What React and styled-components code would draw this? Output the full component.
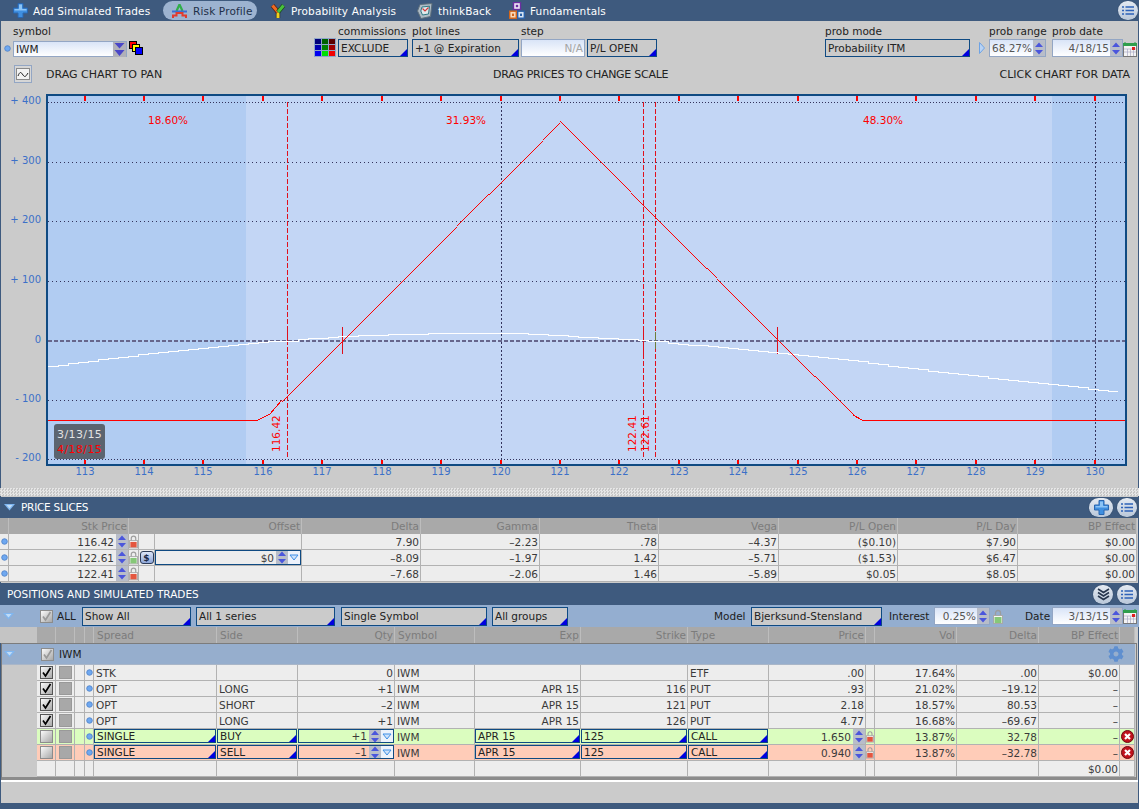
import React from 'react'
import styled, { createGlobalStyle, css } from 'styled-components'
import { FaCog } from 'react-icons/fa'

const NAVY = '#3e5a7e'
const EDGE = '#0f4a82'

const GlobalStyle = createGlobalStyle`
  html, body {
    margin: 0;
    padding: 0;
    width: 1139px;
    height: 809px;
    overflow: hidden;
  }
  body {
    font-family: "DejaVu Sans", "Liberation Sans", sans-serif;
    font-size: 10.5px;
    color: #222;
  }
`

const placed = css`
  flex: none;
  ${(p) => p.$w !== undefined && `width: ${p.$w}px;`}
  ${(p) => p.$ml !== undefined && `margin-left: ${p.$ml}px;`}
`

const Window = styled.div`
  width: 1139px;
  height: 809px;
  display: flex;
  flex-direction: column;
  background: #cbcbcb;
  box-shadow: inset 1px 0 0 ${NAVY}, inset -1px 0 0 ${NAVY};
`

/* ---- top tabs ---- */
const TabBar = styled.div`
  height: 21px;
  flex: none;
  display: flex;
  align-items: center;
  gap: 5px;
  padding: 0 1px 0 5px;
  background: ${NAVY};
`

const Tab = styled.div`
  ${placed}
  height: 19px;
  box-sizing: border-box;
  display: flex;
  align-items: center;
  gap: 5px;
  padding: 0 8px;
  border-radius: 10px;
  white-space: nowrap;
  letter-spacing: 0.15px;
  color: ${(p) => (p.$active ? '#1d2f48' : '#fff')};
  background: ${(p) => (p.$active ? '#9db3d0' : 'transparent')};

  svg {
    flex: none;
  }
`

const RoundButton = styled.div`
  ${placed}
  height: 19px;
  width: ${(p) => p.$wide ? 24 : 20}px;
  border-radius: 10px;
  display: flex;
  align-items: center;
  justify-content: center;
  background: linear-gradient(#e4eaf2, #b9c7d9);
  box-shadow: 0 0 1px #20344f;
`

const BarEnd = styled.div`
  margin-left: auto;
  display: flex;
  gap: 4px;
`

/* ---- form rows ---- */
const FormRow = styled.div`
  height: 43px;
  flex: none;
  box-sizing: border-box;
  padding-top: 3px;
  display: flex;
  align-items: flex-start;
`

const Field = styled.div`
  ${placed}
  display: flex;
  flex-direction: column;
`

const FieldLabel = styled.div`
  height: 15px;
  line-height: 14px;
  white-space: nowrap;
  color: #222;
`

const Bare = styled.div`
  ${placed}
  display: flex;
  align-items: center;
  margin-top: ${(p) => p.$mt || 0}px;
`

const Select = styled.div`
  ${placed}
  position: relative;
  box-sizing: border-box;
  height: ${(p) => p.$h || 18}px;
  border: 1px solid ${EDGE};
  padding: 0 2px;
  display: flex;
  align-items: center;
  white-space: nowrap;
  overflow: hidden;
  background: ${(p) => p.$bg || 'transparent'};
  color: #222;

  &::after {
    content: '';
    position: absolute;
    right: 0;
    bottom: 0;
    border-style: solid;
    border-width: 0 0 7px 7px;
    border-color: transparent transparent #0000e0 transparent;
  }
`

const SpinField = styled.div`
  ${placed}
  box-sizing: border-box;
  height: ${(p) => p.$h || 18}px;
  margin-top: ${(p) => p.$mt || 0}px;
  border: 1px solid #93a6c4;
  display: flex;
  align-items: stretch;
  background: linear-gradient(#d9e4f7, #fff);
  color: ${(p) => p.$muted ? '#a4a4a4' : '#555'};
`

const SpinText = styled.div`
  flex: 1;
  display: flex;
  align-items: center;
  justify-content: flex-end;
  padding-right: 1px;
  white-space: nowrap;
  font-weight: ${(p) => (p.$strong ? 500 : 400)};
  ${(p) => p.$left && 'justify-content: flex-start; padding-left: 2px; color: #222;'}
`

const SpinBlock = styled.div`
  width: 12px;
  flex: none;
  display: flex;
  align-items: center;
  justify-content: center;
  background: #b8bdc9;
`

const HintRow = styled.div`
  height: 28px;
  flex: none;
  display: grid;
  grid-template-columns: 14px 32px 447px 1fr auto;
  align-items: center;
  padding-right: 9px;
  padding-bottom: 8px;
  box-sizing: border-box;
  font-size: 11px;
`

const HintIcon = styled.div`
  grid-column: 2;
  width: 18px;
  height: 18px;
  box-sizing: border-box;
  border: 1px solid #93a6c4;
  display: flex;
  align-items: center;
  justify-content: center;
  background: #d6d6d6;
`

const HintText = styled.div`
  white-space: nowrap;
  letter-spacing: ${(p) => p.$ls || 0}px;
`

/* ---- chart ---- */
const ChartWrap = styled.div`
  position: relative;
  height: 396px;
  flex: none;
`

const ChartSvg = styled.svg`
  display: block;
  font-family: "DejaVu Sans", sans-serif;
  font-size: 10px;
`

const DateTag = styled.div`
  position: absolute;
  left: 54px;
  top: 332px;
  width: 51px;
  height: 35px;
  box-sizing: border-box;
  padding: 3px 0 0 3px;
  border-radius: 3px;
  background: #5b6470;
  font-size: 11px;
  line-height: 15px;
  letter-spacing: 0.4px;
  color: #e2e2e2;
`

const DateRed = styled.div`
  color: #f00;
`

const Splitter = styled.div`
  height: 8px;
  flex: none;
  margin-bottom: 1px;
  background: repeating-conic-gradient(#e6e6e6 0 25%, #c6c6c6 0 50%) 0 0 / 3px 3px;
`

/* ---- sections ---- */
const SectionBar = styled.div`
  height: ${(p) => p.$h}px;
  flex: none;
  box-sizing: border-box;
  display: flex;
  align-items: center;
  padding: 0 2px 0 4px;
  background: ${NAVY};
  color: #fff;
`

const SectionTitle = styled.div`
  margin-left: ${(p) => p.$ml}px;
  white-space: nowrap;
  letter-spacing: ${(p) => p.$ls || 0}px;
  padding-bottom: 1px;
`

const SliceGrid = styled.div`
  display: grid;
  grid-template-columns: 9px 120px 10px 16px 147px 119px 119px 119px 120px 119px 120px 119px;
  grid-auto-rows: 16px;
  flex: none;
  margin-bottom: 1px;
`

const PositionHead = styled.div`
  display: grid;
  grid-template-columns: 37px 19px 19px 10px 9px 123px 81px 97px 80px 106px 107px 81px 97px 9px 82px 82px 81px 15px;
  height: 16px;
  flex: none;
`

const PositionBody = styled.div`
  display: grid;
  grid-template-columns: 35px 19px 19px 10px 9px 123px 81px 97px 80px 106px 107px 81px 97px 9px 82px 82px 81px 15px;
  grid-template-rows: 21px;
  grid-auto-rows: 16px;
  flex: none;
  width: 1134px;
  margin-left: 1px;
  border: 1px solid #7c7c7c;
  border-bottom: 3px solid #8c8c8c;
`

const HeadCell = styled.div`
  grid-column: span ${(p) => p.$span || 1};
  box-sizing: border-box;
  display: flex;
  align-items: center;
  justify-content: ${(p) => (p.$right ? 'flex-end' : 'flex-start')};
  padding: 0 1px 0 3px;
  background: ${(p) => p.$plain ? '#c4c4c4' : '#a9a9a9'};
  border-right: 1px solid ${(p) => p.$plain ? '#c4c4c4' : '#bdbdbd'};
  color: #7c7c7c;
  white-space: nowrap;
`

const tints = { green: '#dbfdbf', red: '#ffccb8' }

const Cell = styled.div`
  grid-column: span ${(p) => p.$span || 1};
  box-sizing: border-box;
  min-width: 0;
  display: flex;
  align-items: center;
  justify-content: ${(p) => (p.$right ? 'flex-end' : p.$center ? 'center' : 'flex-start')};
  padding: ${(p) => (p.$flush ? '0' : '0 1px 0 2px')};
  background: ${(p) => tints[p.$tint] || '#ededed'};
  border-right: 1px solid #b2b2b2;
  border-bottom: 1px solid #b2b2b2;
  color: #3a3a3a;
  white-space: nowrap;
`

const Gutter = styled.div`
  background: #c9c9c9;
`

const EditCell = styled(Select)`
  height: 100%;
  width: 100%;
  padding: 0 2px 0 2px;
  justify-content: ${(p) => (p.$right ? 'flex-end' : 'flex-start')};
`

const EditWrap = styled.div`
  grid-column: span ${(p) => p.$span || 1};
  min-width: 0;
  box-sizing: border-box;
  height: 16px;
  padding: 0 1px 1px 0;
  background: ${(p) => tints[p.$tint]};
  border-bottom: 1px solid #b2b2b2;
`

const QtyField = styled.div`
  height: 100%;
  box-sizing: border-box;
  border: 1px solid ${EDGE};
  display: flex;
  align-items: stretch;
`

const OffsetField = styled(QtyField)`
  flex: 1;
`

const QtyText = styled.div`
  flex: 1;
  display: flex;
  align-items: center;
  justify-content: flex-end;
  padding-right: 2px;
  color: #3a3a3a;
`

const DropBox = styled.div`
  width: 12px;
  flex: none;
  display: flex;
  align-items: center;
  justify-content: center;
  background: #edf2fb;
`

const RightCell = styled(Cell)`
  padding: 0;
`

const GrowRight = styled.div`
  flex: 1;
  text-align: right;
  padding-right: 2px;
`

const MoneyButton = styled.div`
  width: 14px;
  height: 13px;
  box-sizing: border-box;
  border: 1px solid #2c3b57;
  border-radius: 3px;
  background: linear-gradient(#dde6f8, #8da6d8);
  display: flex;
  align-items: center;
  justify-content: center;
  font-size: 9px;
  font-weight: bold;
  color: #1c2a44;
`

const GroupRow = styled.div`
  grid-column: 1 / -1;
  height: 21px;
  box-sizing: border-box;
  display: flex;
  align-items: center;
  padding-left: 2px;
  background: #96aecd;
  border-bottom: 1px solid #a9b6c8;
`

const GearSlot = styled.div`
  margin-left: auto;
  margin-right: 11px;
  display: flex;
`

const Toolbar = styled.div`
  height: 22px;
  flex: none;
  display: flex;
  align-items: center;
  background: #94aed0;
`

const ToolLabel = styled.div`
  ${placed}
  white-space: nowrap;
  color: #1d1d1d;
`

const Status = styled.div`
  height: 23px;
  flex: none;
  box-sizing: border-box;
  border-top: 2px solid #fff;
  margin-left: 1px;
  margin-right: 1px;
`

const Foot = styled.div`
  flex: 1;
  background: ${NAVY};
`

const CheckBox = styled.div`
  ${placed}
  width: 13px;
  height: 13px;
  box-sizing: border-box;
  border: 1px solid ${(p) => (p.$soft ? '#8c8c8c' : '#555')};
  background: linear-gradient(135deg, #fafafa, #a8a8a8);
  display: flex;
  align-items: center;
  justify-content: center;
`

const ChartToggle = styled.div`
  width: 13px;
  height: 13px;
  box-sizing: border-box;
  border: 1px solid #999;
  background: #a8a8a8;
`

/* ---- drawings ---- */
const Check = ({ color = '#000' }) => (
  <svg width="11" height="11" viewBox="0 0 11 11">
    <path d="M2 5.5 L4.5 9 L9.5 1" fill="none" stroke={color} strokeWidth="1.7" />
  </svg>
)

const Collapse = () => (
  <svg width="11" height="7" viewBox="0 0 11 7">
    <path d="M0 0 H11 L5.5 6.5 Z" fill="#7fb6f0" />
    <path d="M2.5 1 H8.5 L5.5 4.5 Z" fill="#bfdcf8" />
  </svg>
)

const Dot = () => (
  <svg width="7" height="7" viewBox="0 0 7 7">
    <circle cx="3.5" cy="3.5" r="2.8" fill="#6fa8f0" stroke="#4d80c8" strokeWidth="0.8" />
  </svg>
)

const Arrows = () => (
  <svg width="10" height="15" viewBox="0 0 10 15">
    <path d="M5 1.5 L9 6 H1 Z M1 9 H9 L5 13.5 Z" fill="#4b56dc" />
  </svg>
)

const DropGlyph = () => (
  <svg width="10" height="7" viewBox="0 0 10 7">
    <path d="M1 1 H9 L5 6 Z" fill="#cfe2fa" stroke="#3e8fe6" />
  </svg>
)

const Lock = ({ color }) => (
  <svg width="10" height="15" viewBox="0 0 10 15">
    <path d="M2.5 7 V4 a2.5 2.5 0 0 1 5 0 V7" fill="none" stroke="#9c9c9c" strokeWidth="1.3" />
    <rect x="0.5" y="6.5" width="9" height="8" fill="#f6f6f6" stroke="#a8a8a8" />
    <rect x="1.5" y="8" width="7" height="6" fill={color === 'green' ? '#86c878' : '#e4563f'} />
  </svg>
)

const ListGlyph = () => (
  <svg width="12" height="9" viewBox="0 0 12 9">
    <path d="M0 1 H2 M3.5 1 H12 M0 4.5 H2 M3.5 4.5 H12 M0 8 H2 M3.5 8 H12" stroke="#2d62b8" strokeWidth="1.4" />
  </svg>
)

const PlusGlyph = () => (
  <svg width="15" height="15" viewBox="0 0 15 15">
    <path d="M5 0.5 H10 V5 H14.5 V10 H10 V14.5 H5 V10 H0.5 V5 H5 Z" fill="#3f8fe0" stroke="#2a66b0" />
    <path d="M6 1.5 H9 V6 H13.5 V7.5 H1.5 V6 H6 Z" fill="#8cc4f6" />
  </svg>
)

const ChevronsGlyph = () => (
  <svg width="13" height="13" viewBox="0 0 13 13">
    <path d="M1 1 L6.5 4.5 L12 1 M1 4.5 L6.5 8 L12 4.5 M1 8 L6.5 11.5 L12 8" fill="none" stroke="#26364e" strokeWidth="1.6" />
  </svg>
)

const RiskIcon = () => (
  <svg width="17" height="16" viewBox="0 0 17 16">
    <path d="M8.5 1.5 L5.5 8 M8.5 1.5 L11.5 8" stroke="#2fae49" strokeWidth="2.2" fill="none" />
    <path d="M1 8.5 H16" stroke="#3d6fd0" strokeWidth="2" />
    <path d="M2 15 V12.5 H5.5 L5.5 10 H11.5 V12.5 H15 V15" stroke="#e23b2e" strokeWidth="2" fill="none" />
  </svg>
)

const ProbabilityIcon = () => (
  <svg width="16" height="16" viewBox="0 0 16 16">
    <path d="M8 15 V9" stroke="#2a2a2a" strokeWidth="4.4" />
    <path d="M8 15 V9" stroke="#f2d21c" strokeWidth="3" />
    <path d="M2.5 2.5 L8 9" stroke="#5a1f10" strokeWidth="4.4" />
    <path d="M2.5 2.5 L8 9" stroke="#ee6a20" strokeWidth="3" />
    <path d="M13.5 2.5 L8 9" stroke="#1c4a1c" strokeWidth="4.4" />
    <path d="M13.5 2.5 L8 9" stroke="#48c23c" strokeWidth="3" />
  </svg>
)

const ThinkBackIcon = () => (
  <svg width="16" height="16" viewBox="0 0 16 16">
    <path d="M3 1.5 L15 0.5 L13.5 13.5 L4 15.5 L0.5 8 Z" fill="#aebcc6" stroke="#5f707c" />
    <path d="M5 4 L12.5 3.2 L11.5 11 L5.5 12 L3.8 8 Z" fill="#dfe9ec" stroke="#2f7884" />
    <path d="M5.5 5.5 L8 8 L11.5 4.5" fill="none" stroke="#d23a3a" strokeWidth="1.2" />
  </svg>
)

const FundamentalsIcon = () => (
  <svg width="16" height="17" viewBox="0 0 16 17">
    <rect x="4.5" y="0.5" width="7" height="7" fill="#efe6f7" stroke="#6b2fa0" strokeWidth="1.4" />
    <rect x="0.7" y="9.2" width="6.6" height="7" fill="#f6d9b8" stroke="#d4661a" strokeWidth="1.4" />
    <rect x="8.7" y="9.2" width="6.6" height="7" fill="#d5e4f4" stroke="#2a62a8" strokeWidth="1.4" />
    <rect x="6.8" y="2.8" width="2.4" height="2.4" fill="#6b2fa0" />
    <rect x="3" y="11.6" width="2" height="2.4" fill="#d4661a" />
    <rect x="11" y="11.6" width="2" height="2.4" fill="#2a62a8" />
  </svg>
)

const Swatches = () => (
  <svg width="14" height="14" viewBox="0 0 14 14">
    <rect x="0.5" y="0.5" width="7" height="7" fill="#f00" stroke="#000" />
    <rect x="3.5" y="3.5" width="7" height="7" fill="#ff0" stroke="#000" />
    <rect x="6.5" y="6.5" width="7" height="7" fill="#00f" stroke="#000" />
  </svg>
)

const gridColors = ['#00007a', '#006000', '#5a0000', '#0000b0', '#008000', '#a00000', '#0000f0', '#00e000', '#f00000']

const ColorGrid = () => (
  <svg width="22" height="19" viewBox="0 0 22 19">
    <rect width="22" height="19" fill="#8ea5c8" />
    {gridColors.map((c, i) => (
      <rect key={c} x={1 + (i % 3) * 7} y={1 + Math.floor(i / 3) * 6} width="6" height="5" fill={c} />
    ))}
  </svg>
)

const Calendar = () => (
  <svg width="14" height="15" viewBox="0 0 14 15">
    <rect x="0.5" y="3.5" width="13" height="11" fill="#f4f4f4" stroke="#777" />
    <rect x="0" y="1" width="14" height="3" fill="#2f9e4c" />
    <path d="M2 0 V2 M12 0 V2" stroke="#2f9e4c" />
    <path d="M1 7 H13 M1 10 H13 M4.5 7 V14 M7.5 7 V14 M10.5 7 V14" stroke="#a9a9c4" strokeWidth="0.7" />
    <rect x="9" y="5" width="3" height="3" fill="#e02020" />
  </svg>
)

const DoubleDrop = () => (
  <svg width="13" height="15" viewBox="0 0 13 15">
    <rect width="13" height="15" fill="#b0b0b8" />
    <path d="M1.5 1 H11.5 L6.5 6.5 Z M1.5 8 H11.5 L6.5 14 Z" fill="#4a46c8" />
  </svg>
)

const CloseGlyph = () => (
  <svg width="13" height="13" viewBox="0 0 13 13">
    <circle cx="6.5" cy="6.5" r="6" fill="#c1121c" stroke="#6b0a10" />
    <path d="M4 4 L9 9 M9 4 L4 9" stroke="#fff" strokeWidth="2.2" />
  </svg>
)

const Squiggle = ({ color = '#222' }) => (
  <svg width="14" height="12" viewBox="0 0 14 12">
    <rect x="0.5" y="0.5" width="13" height="11" fill="#f3f3f3" stroke="#8a8a8a" />
    <path d="M2 8 C4 3 5 4 7 7 S10 8 12 5" fill="none" stroke={color} />
  </svg>
)

/* ---- chart data, page coordinates ---- */
const ticks = [85, 144, 203, 263, 322, 382, 441, 501, 560, 619, 679, 738, 798, 857, 916, 976, 1035, 1095]
const gridY = [
  { y: 102, label: '+ 400', dash: '1 2' },
  { y: 162, label: '+ 300', dash: '1 3' },
  { y: 221, label: '+ 200', dash: '1 3' },
  { y: 281, label: '+ 100', dash: '1 3' },
  { y: 400, label: '- 100', dash: '1 3' },
  { y: 459, label: '- 200', dash: '1 2' },
]

const theo = [
  [48, 366], [100, 359], [150, 353], [200, 348], [246, 343], [262, 341], [285, 341.5], [300, 339], [340, 336],
  [400, 334], [450, 333], [490, 332.5], [535, 334], [600, 338], [640, 340], [660, 341.5], [680, 344], [720, 347],
  [778, 353], [800, 355.5], [850, 360], [900, 367.5], [950, 373], [1000, 379], [1052, 384], [1100, 390], [1125, 392],
]

// theoretical curve comes out in small flat steps like the real plot
const stepPath = () => {
  let d = ''
  let lastY = null
  for (let x = 48; x <= 1125; x += 10) {
    let i = 0
    while (i < theo.length - 2 && theo[i + 1][0] < x) i++
    const [x0, y0] = theo[i]
    const [x1, y1] = theo[i + 1]
    const y = Math.round(y0 + ((y1 - y0) * (x - x0)) / (x1 - x0)) + 0.5
    if (lastY === null) d += `M${x} ${y}`
    else d += `H${x}V${y}`
    lastY = y
  }
  return d
}

// the diagonals are plotted pixel by pixel; the real plot jogs one pixel over in these stretches
const jogs = [[457, 488], [543, 559], [560, 630], [707, 716], [815, 853]]
const isJogged = (x) => jogs.some(([a, b]) => x >= a && x <= b)
const pixel = (x, y) => `M${x} ${y}h1v1h-1z`

const diagonalPath = () => {
  let d = ''
  for (let x = 282; x < 560; x++) d += pixel(x, (isJogged(x) ? 682 : 683) - x)
  for (let x = 560; x <= 853; x++) d += pixel(x, x - (isJogged(x) ? 439 : 438))
  return d
}

const Chart = () => (
  <ChartSvg width="1139" height="396" viewBox="0 92 1139 396">
    <rect x="47" y="95" width="1079" height="370" fill="#c3d6f5" />
    <rect x="47" y="95" width="199" height="370" fill="#b1ccf2" />
    <rect x="1052" y="95" width="74" height="370" fill="#b1ccf2" />

    <g shapeRendering="crispEdges">
      {gridY.map((g) => (
        <line key={g.y} x1="48" x2="1125" y1={g.y + 0.5} y2={g.y + 0.5} stroke="#33335c" strokeDasharray={g.dash} />
      ))}
      <line x1="48" x2="1125" y1="341" y2="341" stroke="#66668c" strokeWidth="2" strokeDasharray="4 2" />
      <line x1="501.5" x2="501.5" y1="102" y2="459" stroke="#33335c" strokeDasharray="2 2" />
      <line x1="1095.5" x2="1095.5" y1="102" y2="459" stroke="#33335c" strokeDasharray="2 2" />
      {[287.5, 643.5, 655.5].map((x) => (
        <line key={x} x1={x} x2={x} y1="102" y2="459" stroke="#e0101c" strokeDasharray="5 2" />
      ))}
      <line x1="287.5" x2="287.5" y1="326" y2="345" stroke="#e0101c" />
      <line x1="643.5" x2="643.5" y1="327" y2="355" stroke="#e0101c" />
      <line x1="655.5" x2="655.5" y1="332" y2="349" stroke="#6f7f3a" />
      <line x1="342.5" x2="342.5" y1="327" y2="354" stroke="#e0101c" />
      <line x1="777.5" x2="777.5" y1="327" y2="354" stroke="#e0101c" />
      {ticks.map((x) => (
        <g key={x}>
          <rect x={x - 1} y="96" width="2" height="5" fill="#f00" />
          <rect x={x - 1} y="460" width="2" height="5" fill="#f00" />
        </g>
      ))}
    </g>

    <path d={stepPath()} fill="none" stroke="#fff" strokeWidth="1" shapeRendering="crispEdges" />
    <path d={diagonalPath()} fill="#f00" shapeRendering="crispEdges" />
    <path
      d="M48 420.5 H257 L270 414 L282 400 M853 415 L863 420.5 H1125"
      fill="none"
      stroke="#f00"
      strokeWidth="1"
      shapeRendering="crispEdges"
    />

    <rect x="47" y="95" width="1079" height="370" fill="none" stroke={EDGE} strokeWidth="2" />

    <g fill="#3b70c8">
      {gridY.map((g) => (
        <text key={g.y} x="41" y={g.y + 2} textAnchor="end">{g.label}</text>
      ))}
      <text x="41" y="343" textAnchor="end">0</text>
      {ticks.map((x, i) => (
        <text key={x} x={x} y="475" textAnchor="middle">{113 + i}</text>
      ))}
    </g>

    <g fill="#f00" fontSize="10.5">
      <text x="148" y="124">18.60%</text>
      <text x="446" y="124">31.93%</text>
      <text x="863" y="124">48.30%</text>
      <text transform="translate(280 452) rotate(-90)">116.42</text>
      <text transform="translate(636 452) rotate(-90)">122.41</text>
      <text transform="translate(649 452) rotate(-90)">122.61</text>
    </g>
  </ChartSvg>
)

/* ---- table data ---- */
const slices = [
  { price: '116.42', lock: 'red', delta: '7.90', gamma: '–2.23', theta: '.78', vega: '–4.37', open: '($0.10)', day: '$7.90' },
  { price: '122.61', lock: 'green', offset: true, delta: '–8.09', gamma: '–1.97', theta: '1.42', vega: '–5.71', open: '($1.53)', day: '$6.47' },
  { price: '122.41', lock: 'red', delta: '–7.68', gamma: '–2.06', theta: '1.46', vega: '–5.89', open: '$0.05', day: '$8.05' },
]

const positions = [
  { spread: 'STK', side: '', qty: '0', exp: '', strike: '', type: 'ETF', price: '.00', vol: '17.64%', delta: '.00', bp: '$0.00', on: true },
  { spread: 'OPT', side: 'LONG', qty: '+1', exp: 'APR 15', strike: '116', type: 'PUT', price: '.93', vol: '21.02%', delta: '–19.12', bp: '–', on: true },
  { spread: 'OPT', side: 'SHORT', qty: '–2', exp: 'APR 15', strike: '121', type: 'PUT', price: '2.18', vol: '18.57%', delta: '80.53', bp: '–', on: true },
  { spread: 'OPT', side: 'LONG', qty: '+1', exp: 'APR 15', strike: '126', type: 'PUT', price: '4.77', vol: '16.68%', delta: '–69.67', bp: '–', on: true },
]

const simulated = [
  { tint: 'green', side: 'BUY', qty: '+1', price: '1.650', delta: '32.78' },
  { tint: 'red', side: 'SELL', qty: '–1', price: '0.940', delta: '–32.78' },
]

const PositionRow = ({ row }) => (
  <>
    <Gutter />
    <Cell $center $flush><CheckBox $soft={false}><Check /></CheckBox></Cell>
    <Cell $center $flush><ChartToggle /></Cell>
    <Cell $flush />
    <Cell $center $flush><Dot /></Cell>
    <Cell>{row.spread}</Cell>
    <Cell>{row.side}</Cell>
    <Cell $right>{row.qty}</Cell>
    <Cell>IWM</Cell>
    <Cell $right>{row.exp}</Cell>
    <Cell $right>{row.strike}</Cell>
    <Cell>{row.type}</Cell>
    <Cell $right>{row.price}</Cell>
    <Cell $flush />
    <Cell $right>{row.vol}</Cell>
    <Cell $right>{row.delta}</Cell>
    <Cell $right>{row.bp}</Cell>
    <Cell $flush />
  </>
)

const SimulatedRow = ({ row }) => (
  <>
    <Gutter />
    <Cell $tint={row.tint} $center $flush><CheckBox $soft /></Cell>
    <Cell $tint={row.tint} $center $flush><ChartToggle /></Cell>
    <Cell $tint={row.tint} $flush />
    <Cell $tint={row.tint} $center $flush><Dot /></Cell>
    <EditWrap $tint={row.tint}><EditCell>SINGLE</EditCell></EditWrap>
    <EditWrap $tint={row.tint}><EditCell>{row.side}</EditCell></EditWrap>
    <EditWrap $tint={row.tint}>
      <QtyField>
        <QtyText>{row.qty}</QtyText>
        <SpinBlock><Arrows /></SpinBlock>
        <DropBox><DropGlyph /></DropBox>
      </QtyField>
    </EditWrap>
    <Cell $tint={row.tint}>IWM</Cell>
    <EditWrap $tint={row.tint}><EditCell>APR 15</EditCell></EditWrap>
    <EditWrap $tint={row.tint}><EditCell>125</EditCell></EditWrap>
    <EditWrap $tint={row.tint}><EditCell>CALL</EditCell></EditWrap>
    <RightCell $tint={row.tint}>
      <GrowRight>{row.price}</GrowRight>
      <SpinBlock><Arrows /></SpinBlock>
    </RightCell>
    <Cell $tint={row.tint} $center $flush><Lock color="red" /></Cell>
    <Cell $tint={row.tint} $right>13.87%</Cell>
    <Cell $tint={row.tint} $right>{row.delta}</Cell>
    <Cell $tint={row.tint} $right>–</Cell>
    <Cell $tint={row.tint} $center $flush><CloseGlyph /></Cell>
  </>
)

const headLabels = [
  ['Spread', false], ['Side', false], ['Qty', true], ['Symbol', false], ['Exp', true], ['Strike', true], ['Type', false],
  ['Price', true], ['', false], ['Vol', true], ['Delta', true], ['BP Effect', true], ['', false],
]

const App = () => (
  <Window>
    <GlobalStyle />
    <TabBar>
      <Tab $w={153}><PlusGlyph />Add Simulated Trades</Tab>
      <Tab $w={94} $active><RiskIcon />Risk Profile</Tab>
      <Tab $w={142}><ProbabilityIcon />Probability Analysis</Tab>
      <Tab $w={87}><ThinkBackIcon />thinkBack</Tab>
      <Tab $w={111}><FundamentalsIcon />Fundamentals</Tab>
      <BarEnd><RoundButton><ListGlyph /></RoundButton></BarEnd>
    </TabBar>

    <FormRow>
      <Bare $ml={4} $w={9} $mt={21}><Dot /></Bare>
      <Field $w={114}>
        <FieldLabel>symbol</FieldLabel>
        <SpinField $h={16} $mt={2}>
          <SpinText $left $strong>IWM</SpinText>
          <DoubleDrop />
        </SpinField>
      </Field>
      <Bare $ml={2} $mt={17}><Swatches /></Bare>
      <Bare $ml={171} $mt={14}><ColorGrid /></Bare>
      <Field $ml={2} $w={70}>
        <FieldLabel>commissions</FieldLabel>
        <Select>EXCLUDE</Select>
      </Field>
      <Field $ml={4} $w={107}>
        <FieldLabel>plot lines</FieldLabel>
        <Select>+1 @ Expiration</Select>
      </Field>
      <Field $ml={2} $w={64}>
        <FieldLabel>step</FieldLabel>
        <SpinField $muted><SpinText>N/A</SpinText></SpinField>
      </Field>
      <Field $ml={2} $w={70}>
        <FieldLabel>&nbsp;</FieldLabel>
        <Select>P/L OPEN</Select>
      </Field>
      <Field $ml={168} $w={145}>
        <FieldLabel>prob mode</FieldLabel>
        <Select>Probability ITM</Select>
      </Field>
      <Bare $ml={9} $mt={18}>
        <svg width="6" height="12" viewBox="0 0 6 12">
          <path d="M0.5 0.5 L5.5 6 L0.5 11.5 Z" fill="#b9d3f4" stroke="#6ea3e4" />
        </svg>
      </Bare>
      <Field $ml={4} $w={57}>
        <FieldLabel>prob range</FieldLabel>
        <SpinField>
          <SpinText>68.27%</SpinText>
          <SpinBlock><Arrows /></SpinBlock>
        </SpinField>
      </Field>
      <Field $ml={6} $w={71}>
        <FieldLabel>prob date</FieldLabel>
        <SpinField>
          <SpinText>4/18/15</SpinText>
          <SpinBlock><Arrows /></SpinBlock>
        </SpinField>
      </Field>
      <Bare $mt={18}><Calendar /></Bare>
    </FormRow>

    <HintRow>
      <HintIcon><Squiggle /></HintIcon>
      <HintText>DRAG CHART TO PAN</HintText>
      <HintText $ls={-0.27}>DRAG PRICES TO CHANGE SCALE</HintText>
      <HintText>CLICK CHART FOR DATA</HintText>
    </HintRow>

    <ChartWrap>
      <Chart />
      <DateTag>
        3/13/15
        <DateRed>4/18/15</DateRed>
      </DateTag>
    </ChartWrap>
    <Splitter />

    <SectionBar $h={21}>
      <Collapse />
      <SectionTitle $ml={6} $ls={-0.25}>PRICE SLICES</SectionTitle>
      <BarEnd>
        <RoundButton $wide><PlusGlyph /></RoundButton>
        <RoundButton><ListGlyph /></RoundButton>
      </BarEnd>
    </SectionBar>

    <SliceGrid>
      <HeadCell />
      <HeadCell $right>Stk Price</HeadCell>
      <HeadCell $span={3} $right>Offset</HeadCell>
      {['Delta', 'Gamma', 'Theta', 'Vega', 'P/L Open', 'P/L Day', 'BP Effect'].map((h) => (
        <HeadCell key={h} $right>{h}</HeadCell>
      ))}
      {slices.map((s) => (
        <React.Fragment key={s.price}>
          <Cell $center $flush><Dot /></Cell>
          <RightCell>
            <GrowRight>{s.price}</GrowRight>
            <SpinBlock><Arrows /></SpinBlock>
          </RightCell>
          <Cell $center $flush><Lock color={s.lock} /></Cell>
          <Cell $center $flush>{s.offset && <MoneyButton>$</MoneyButton>}</Cell>
          {s.offset ? (
            <RightCell>
              <OffsetField>
                <QtyText>$0</QtyText>
                <SpinBlock><Arrows /></SpinBlock>
                <DropBox><DropGlyph /></DropBox>
              </OffsetField>
            </RightCell>
          ) : (
            <Cell />
          )}
          <Cell $right>{s.delta}</Cell>
          <Cell $right>{s.gamma}</Cell>
          <Cell $right>{s.theta}</Cell>
          <Cell $right>{s.vega}</Cell>
          <Cell $right>{s.open}</Cell>
          <Cell $right>{s.day}</Cell>
          <Cell $right>$0.00</Cell>
        </React.Fragment>
      ))}
    </SliceGrid>

    <SectionBar $h={22}>
      <SectionTitle $ml={3}>POSITIONS AND SIMULATED TRADES</SectionTitle>
      <BarEnd>
        <RoundButton><ChevronsGlyph /></RoundButton>
        <RoundButton><ListGlyph /></RoundButton>
      </BarEnd>
    </SectionBar>

    <Toolbar>
      <Bare $ml={3} $w={11}><Collapse /></Bare>
      <CheckBox $ml={26} $soft><Check color="#999" /></CheckBox>
      <ToolLabel $ml={4} $w={22}>ALL</ToolLabel>
      <Select $ml={3} $w={109} $h={19} $bg="#cbcbcb">Show All</Select>
      <Select $ml={5} $w={139} $h={19} $bg="#cbcbcb">All 1 series</Select>
      <Select $ml={6} $w={146} $h={19} $bg="#cbcbcb">Single Symbol</Select>
      <Select $ml={5} $w={76} $h={19} $bg="#cbcbcb">All groups</Select>
      <ToolLabel $ml={146} $w={34}>Model</ToolLabel>
      <Select $ml={3} $w={131} $h={19} $bg="#cbcbcb">Bjerksund-Stensland</Select>
      <ToolLabel $ml={7} $w={41}>Interest</ToolLabel>
      <SpinField $ml={4} $w={56}>
        <SpinText>0.25%</SpinText>
        <SpinBlock><Arrows /></SpinBlock>
      </SpinField>
      <Bare $ml={3}><Lock color="green" /></Bare>
      <ToolLabel $ml={22} $w={24}>Date</ToolLabel>
      <SpinField $ml={3} $w={71}>
        <SpinText>3/13/15</SpinText>
        <SpinBlock><Arrows /></SpinBlock>
      </SpinField>
      <Calendar />
    </Toolbar>

    <PositionHead>
      <HeadCell $plain />
      <HeadCell />
      <HeadCell />
      <HeadCell />
      <HeadCell />
      {headLabels.map(([h, right], i) => (
        <HeadCell key={h || i} $right={right}>{h}</HeadCell>
      ))}
    </PositionHead>

    <PositionBody>
      <GroupRow>
        <Collapse />
        <CheckBox $ml={26} $soft><Check color="#999" /></CheckBox>
        <ToolLabel $ml={5}>IWM</ToolLabel>
        <GearSlot><FaCog size={16} color="#5f8fcf" /></GearSlot>
      </GroupRow>
      {positions.map((row) => <PositionRow key={row.side + row.qty + row.strike} row={row} />)}
      {simulated.map((row) => <SimulatedRow key={row.side} row={row} />)}
      <Gutter />
      {Array.from({ length: 15 }, (_, i) => <Cell key={i} $flush />)}
      <Cell $right>$0.00</Cell>
      <Cell $flush />
    </PositionBody>

    <Status />
    <Foot />
  </Window>
)

export default App
